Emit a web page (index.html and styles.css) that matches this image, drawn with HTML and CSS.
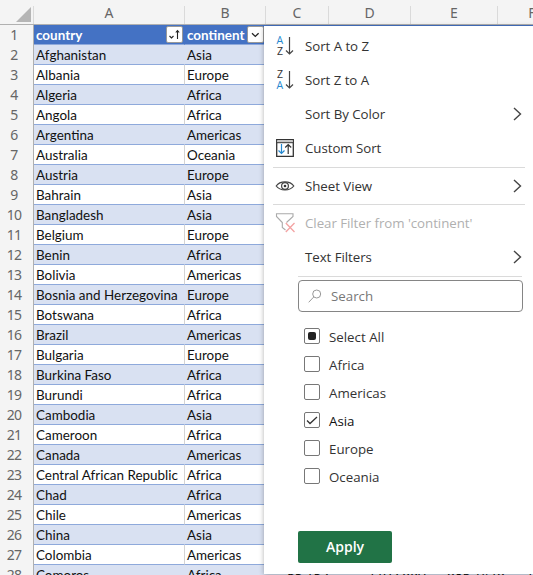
FILE: index.html
```html
<!DOCTYPE html>
<html lang="en">
<head>
<meta charset="utf-8">
<title>Countries</title>
<link rel="stylesheet" href="styles.css">
</head>
<body>
<div class="sheet">
  <div class="columns">
    <div class="corner"><svg width="15" height="15" viewBox="0 0 15 15"><path d="M15 0V15H0Z" fill="#b5b5b5"/></svg></div>
    <div>A</div><div>B</div><div>C</div><div>D</div><div>E</div><div>F</div>
  </div>
  <div class="row head"><b>1</b>
    <span>country<i class="filter"><svg width="17" height="17" viewBox="0 0 17 17" fill="none" stroke="#222" stroke-width="1.1"><path d="M3.500 10l2 2 2-2M11.500 13V5M9.800 6.500l1.700-2 1.700 2"/></svg></i></span>
    <span>continent<i class="filter"><svg width="17" height="17" viewBox="0 0 17 17" fill="none" stroke="#222" stroke-width="1.3"><path d="M5 7.200l3.300 3.200 3.300-3.200"/></svg></i></span></div>
  <div class="row"><b>2</b><span>Afghanistan</span><span>Asia</span></div>
  <div class="row"><b>3</b><span>Albania</span><span>Europe</span></div>
  <div class="row"><b>4</b><span>Algeria</span><span>Africa</span></div>
  <div class="row"><b>5</b><span>Angola</span><span>Africa</span></div>
  <div class="row"><b>6</b><span>Argentina</span><span>Americas</span></div>
  <div class="row"><b>7</b><span>Australia</span><span>Oceania</span></div>
  <div class="row"><b>8</b><span>Austria</span><span>Europe</span></div>
  <div class="row"><b>9</b><span>Bahrain</span><span>Asia</span></div>
  <div class="row"><b>10</b><span>Bangladesh</span><span>Asia</span></div>
  <div class="row"><b>11</b><span>Belgium</span><span>Europe</span></div>
  <div class="row"><b>12</b><span>Benin</span><span>Africa</span></div>
  <div class="row"><b>13</b><span>Bolivia</span><span>Americas</span></div>
  <div class="row"><b>14</b><span>Bosnia and Herzegovina</span><span>Europe</span></div>
  <div class="row"><b>15</b><span>Botswana</span><span>Africa</span></div>
  <div class="row"><b>16</b><span>Brazil</span><span>Americas</span></div>
  <div class="row"><b>17</b><span>Bulgaria</span><span>Europe</span></div>
  <div class="row"><b>18</b><span>Burkina Faso</span><span>Africa</span></div>
  <div class="row"><b>19</b><span>Burundi</span><span>Africa</span></div>
  <div class="row"><b>20</b><span>Cambodia</span><span>Asia</span></div>
  <div class="row"><b>21</b><span>Cameroon</span><span>Africa</span></div>
  <div class="row"><b>22</b><span>Canada</span><span>Americas</span></div>
  <div class="row"><b>23</b><span>Central African Republic</span><span>Africa</span></div>
  <div class="row"><b>24</b><span>Chad</span><span>Africa</span></div>
  <div class="row"><b>25</b><span>Chile</span><span>Americas</span></div>
  <div class="row"><b>26</b><span>China</span><span>Asia</span></div>
  <div class="row"><b>27</b><span>Colombia</span><span>Americas</span></div>
  <div class="row last"><b>28</b><span>Comoros</span><span>Africa</span><span>65.152</span><span>1102.990</span><span>986.1479</span><span>1</span></div>
</div>

<div class="menu">
  <div class="item"><svg class="icon" width="20" height="22" viewBox="0 0 20 22"><text x="1.500" y="9" class="letter blue">A</text><text x="2" y="19.500" class="letter">Z</text><path d="M14.500 2v17M11 15.500l3.500 3.500 3.500-3.500" fill="none" stroke="#444" stroke-width="1.2"/></svg><span>Sort A to Z</span></div>
  <div class="item"><svg class="icon" width="20" height="22" viewBox="0 0 20 22"><text x="2" y="9" class="letter">Z</text><text x="1.500" y="19.500" class="letter blue">A</text><path d="M14.500 2v17M11 15.500l3.500 3.500 3.500-3.500" fill="none" stroke="#444" stroke-width="1.2"/></svg><span>Sort Z to A</span></div>
  <div class="item"><span>Sort By Color</span><svg class="chevron" width="9" height="14" viewBox="0 0 9 14"><path d="M1 1l6.500 6L1 13"/></svg></div>
  <div class="item"><svg class="icon" width="20" height="22" viewBox="0 0 20 22" fill="none"><path d="M1.700 2.700h16.600v16.600H1.700z" fill="#fff" stroke="#333" stroke-width="1.3"/><path d="M2.300 3.300h15.400v2H2.300z" fill="#c8c8c8"/><path d="M2 5.700h16" stroke="#333"/><path d="M6.500 7v9.500M3.500 13.500l3 3 3-3" stroke="#2488d0" stroke-width="1.2"/><path d="M13.200 17V7.500M10.200 10.500l3-3 3 3" stroke="#333" stroke-width="1.2"/></svg><span>Custom Sort</span></div>
  <hr>
  <div class="item view"><svg class="icon" width="20" height="22" viewBox="0 0 20 22" fill="none" stroke="#444" stroke-width="1.2"><path d="M1.200 11C5 5.600 15 5.600 18.800 11C15 16.200 5 16.200 1.200 11Z"/><circle cx="10" cy="11" r="3.400"/><circle cx="10" cy="11" r="1.300" fill="#333" stroke="none"/></svg><span>Sheet View</span><svg class="chevron" width="9" height="14" viewBox="0 0 9 14"><path d="M1 1l6.500 6L1 13"/></svg></div>
  <hr>
  <div class="item disabled"><svg class="icon" width="20" height="22" viewBox="0 0 20 22" fill="none"><path d="M10.500 18L7.300 15.500V10.500L1.500 4.500V1.700H18V4.500L11.500 10.500" stroke="#aaa" stroke-width="1.100"/><path d="M10.800 11l8.700 9M19.500 11l-8.700 9" stroke="#f3a3a3" stroke-width="1.300"/></svg><span>Clear Filter from 'continent'</span></div>
  <div class="item"><span>Text Filters</span><svg class="chevron" width="9" height="14" viewBox="0 0 9 14"><path d="M1 1l6.500 6L1 13"/></svg></div>
  <hr class="short">
  <div class="search"><svg width="14" height="14" viewBox="0 0 14 14" fill="none" stroke="#999"><circle cx="8.700" cy="5" r="4"/><path d="M5.800 7.900L.7 13.300"/></svg><span>Search</span></div>
  <div class="options">
    <div class="option"><i class="box mixed"></i><span>Select All</span></div>
    <div class="option"><i class="box"></i><span>Africa</span></div>
    <div class="option"><i class="box"></i><span>Americas</span></div>
    <div class="option checked"><i class="box"><svg width="14" height="14" viewBox="0 0 14 14" fill="none" stroke="#333" stroke-width="1.300"><path d="M2 7.500l3 3 7-6.500"/></svg></i><span>Asia</span></div>
    <div class="option"><i class="box"></i><span>Europe</span></div>
    <div class="option"><i class="box"></i><span>Oceania</span></div>
  </div>
  <div class="apply">Apply</div>
</div>
</body>
</html>
```
FILE: styles.css
```css
* { box-sizing: border-box; }
body { margin: 0; width: 533px; height: 575px; overflow: hidden; position: relative; background: #fff; }
.sheet { width: 533px; height: 575px; overflow: hidden; font: 13.45px/20px Lato, sans-serif; color: #111; }
.columns { display: grid; grid-template-columns: 34px 151px 81px 63px 82px 87px 69px; width: 567px; height: 25px; padding-top: 6px; background: #f4f4f4; border-bottom: 1px solid #b0b0b0; font: 14px/14px "Noto Sans", sans-serif; color: #666; text-align: center; }
.columns div { border-right: 1px solid #dadada; }
.columns .corner { padding: 1px 2px 0 0; text-align: right; line-height: 0; }
.row { display: grid; grid-template-columns: 34px 151px 348px; height: 20px; background: #fff; }
.row b { background: #f4f4f4; border-right: 1px solid #b0b0b0; border-bottom: 1px solid #dadada; font: 14px/20px "Noto Sans", sans-serif; color: #666; text-align: center; padding-right: 5px; letter-spacing: -.7px; }
.row span { position: relative; height: 20px; padding-left: 2px; border-bottom: 1px solid #8ea9db; border-right: 1px solid #d4d4d4; white-space: nowrap; line-height: 21px; }
.row:nth-child(odd) span { background: #d9e1f2; border-right-color: #d9e1f2; }
.row.last { grid-template-columns: 34px 151px 101px 81px 79px 79px 8px; }
.row.last span { overflow: hidden; padding-left: 1px; }
.row.last span:nth-child(-n+3) { padding-left: 2px; }
.row.head span { background: #4472c4; border-right-color: #4472c4; color: #fff; font-weight: 700; }
.row.head span:last-child { width: 81px; }
.row.head { background: #4472c4; }
.filter { position: absolute; right: 1px; top: 1px; width: 17px; height: 17px; background: #fff; border: 1px solid #999; border-radius: 2px; }
.filter svg { display: block; margin: -1px; }

.menu { position: absolute; left: 264px; top: 26px; width: 269px; height: 548px; padding: 3px 8px 0 9px; background: #fff; box-shadow: 0 1px 5px rgba(0,0,0,.3); font: 13.3px/34px "Open Sans", sans-serif; color: #333; }
.item { display: grid; grid-template-columns: 32px 1fr 9px; height: 34px; align-items: center; white-space: nowrap; }
.item > span { grid-column: 2; grid-row: 1; letter-spacing: -.05px; }
.icon { grid-column: 1; grid-row: 1; margin-left: 2px; }
.letter { font: 10.5px "Open Sans", sans-serif; fill: #333; }
.letter.blue { fill: #2488d0; }
.chevron { grid-column: 3; grid-row: 1; margin-left: -3px; fill: none; stroke: #444; stroke-width: 1.4; }
.menu hr { width: 252px; height: 1px; margin: 2px 0 0; border: 0; background: #dadada; }
.view { height: 36px; }
.view + hr { margin: 0; }
.disabled { color: #b0b0b0; margin-top: 1px; }
.menu hr.short { width: 224px; margin: 2px 0 0 25px; }
.search { display: flex; align-items: center; gap: 9px; width: 225px; height: 32px; margin: 3px 0 0 25px; padding-left: 9px; border: 1px solid #858585; border-radius: 4px; color: #777; }
.options { padding: 11px 0 0 31px; }
.option { display: flex; align-items: center; gap: 9px; height: 28px; line-height: 28px; }
.box { display: block; width: 16px; height: 16px; margin-top: -2px; border: 1px solid #777; border-radius: 2px; }
.box svg { display: block; }
.mixed::before { content: ""; display: block; width: 8px; height: 8px; margin: 3px; border-radius: 2px; background: #222; }
.checked { color: #111; }
.apply { width: 94px; height: 32px; margin: 40px 0 0 25px; background: #217346; border-radius: 2px; color: #fff; font-weight: 600; font-size: 14px; line-height: 32px; text-align: center; }
```
